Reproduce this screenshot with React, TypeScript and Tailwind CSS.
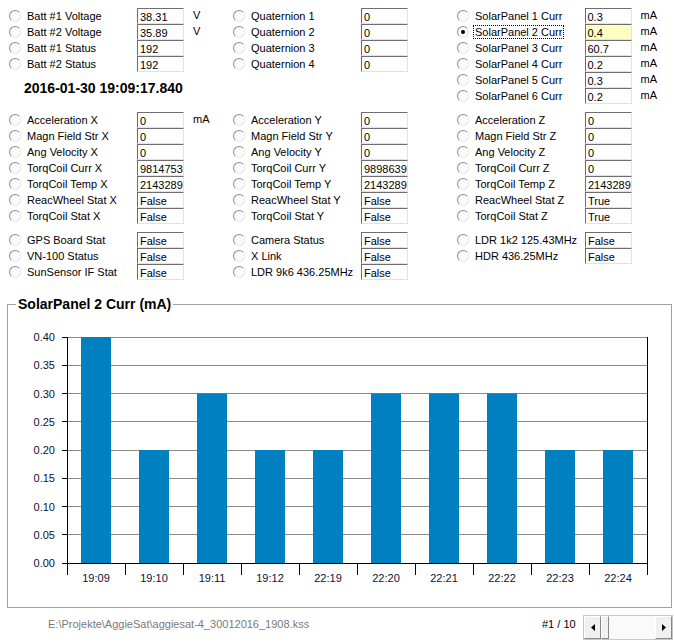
import React from "react";

type Field = { label: string; value: string; unit?: string; checked?: boolean; hilite?: boolean };

const sec1: Field[][] = [
  [
    { label: "Batt #1 Voltage", value: "38.31", unit: "V" },
    { label: "Batt #2 Voltage", value: "35.89", unit: "V" },
    { label: "Batt #1 Status", value: "192" },
    { label: "Batt #2 Status", value: "192" },
  ],
  [
    { label: "Quaternion 1", value: "0" },
    { label: "Quaternion 2", value: "0" },
    { label: "Quaternion 3", value: "0" },
    { label: "Quaternion 4", value: "0" },
  ],
  [
    { label: "SolarPanel 1 Curr", value: "0.3", unit: "mA" },
    { label: "SolarPanel 2 Curr", value: "0.4", unit: "mA", checked: true, hilite: true },
    { label: "SolarPanel 3 Curr", value: "60.7", unit: "mA" },
    { label: "SolarPanel 4 Curr", value: "0.2", unit: "mA" },
    { label: "SolarPanel 5 Curr", value: "0.3", unit: "mA" },
    { label: "SolarPanel 6 Curr", value: "0.2", unit: "mA" },
  ],
];

const axisRows = (a: string, vals: string[]): Field[] => [
  { label: "Acceleration " + a, value: vals[0], unit: a === "X" ? "mA" : undefined },
  { label: "Magn Field Str " + a, value: vals[1] },
  { label: "Ang Velocity " + a, value: vals[2] },
  { label: "TorqCoil Curr " + a, value: vals[3] },
  { label: "TorqCoil Temp " + a, value: vals[4] },
  { label: "ReacWheel Stat " + a, value: vals[5] },
  { label: "TorqCoil Stat " + a, value: vals[6] },
];

const sec2: Field[][] = [
  axisRows("X", ["0", "0", "0", "9814753", "2143289", "False", "False"]),
  axisRows("Y", ["0", "0", "0", "9898639", "2143289", "False", "False"]),
  axisRows("Z", ["0", "0", "0", "0", "2143289", "True", "True"]),
];

const sec3: Field[][] = [
  [
    { label: "GPS Board Stat", value: "False" },
    { label: "VN-100 Status", value: "False" },
    { label: "SunSensor IF Stat", value: "False" },
  ],
  [
    { label: "Camera Status", value: "False" },
    { label: "X Link", value: "False" },
    { label: "LDR 9k6 436.25MHz", value: "False" },
  ],
  [
    { label: "LDR 1k2 125.43MHz", value: "False" },
    { label: "HDR 436.25MHz", value: "False" },
  ],
];

const values = [0.4, 0.2, 0.3, 0.2, 0.2, 0.3, 0.3, 0.3, 0.2, 0.2];
const times = ["19:09", "19:10", "19:11", "19:12", "22:19", "22:20", "22:21", "22:22", "22:23", "22:24"];

function Radio({ checked }: { checked?: boolean }) {
  return (
    <span className="flex h-[12px] w-[12px] shrink-0 items-center justify-center rounded-full border border-t-[#8e8e8e] border-l-[#8e8e8e] border-b-[#e4e4e4] border-r-[#e4e4e4] bg-[#fbfbfb]">
      {checked && <span className="h-[4px] w-[4px] rounded-full bg-black" />}
    </span>
  );
}

function Row({ f }: { f: Field }) {
  return (
    <div className="flex h-[16px] items-center">
      <Radio checked={f.checked} />
      <span className="ml-[5px] w-[111px] whitespace-nowrap">
        <span className={f.checked ? "px-[1px] outline-1 outline-dotted outline-black" : "px-[1px]"}>{f.label}</span>
      </span>
      <div
        className={
          "h-[16px] w-[47px] shrink-0 border border-t-[#6e6e6e] border-l-[#6e6e6e] border-b-[#e2e2e2] border-r-[#e2e2e2] pl-[2px] pt-[2px] leading-[13px] " +
          (f.hilite ? "bg-[#ffffc4]" : "bg-white")
        }
      >
        {f.value}
      </div>
      {f.unit && <span className="ml-[9px] -mt-[3px]">{f.unit}</span>}
    </div>
  );
}

function Section({ cols, extra }: { cols: Field[][]; extra?: React.ReactNode }) {
  return (
    <div className="grid grid-cols-[224px_224px_200px]">
      {cols.map((c, i) => (
        <div key={i} className="flex flex-col">
          {c.map((f) => (
            <Row key={f.label} f={f} />
          ))}
          {i === 0 && extra}
        </div>
      ))}
    </div>
  );
}

function Chart() {
  const x0 = 59, y0 = 251, top = 25, right = 639, cw = 58;
  const step = (y0 - top) / 8;
  const scale = (y0 - top) / 0.4;
  return (
    <svg width="663" height="295" viewBox="0 0 663 295" className="block">
      {Array.from({ length: 9 }).map((_, i) => {
        const y = y0 - i * step;
        return (
          <g key={i}>
            <line x1={x0} x2={right} y1={y} y2={y} stroke={i === 0 ? "#000" : "#8a8a8a"} strokeWidth="1" shapeRendering="crispEdges" />
            <line x1={x0 - 5} x2={x0} y1={y} y2={y} stroke="#000" shapeRendering="crispEdges" />
            <text x={47} y={y + 4} textAnchor="end" fontSize="11" fontFamily="Liberation Sans, Arial, sans-serif" fill="#101030">
              {(i * 0.05).toFixed(2)}
            </text>
          </g>
        );
      })}
      {values.map((v, k) => (
        <rect key={k} x={x0 + cw * k + 14} y={y0 - v * scale} width={30} height={v * scale} fill="#0080c0" />
      ))}
      <line x1={x0} x2={x0} y1={top} y2={y0} stroke="#000" shapeRendering="crispEdges" />
      <line x1={right} x2={right} y1={top} y2={y0} stroke="#000" shapeRendering="crispEdges" />
      {Array.from({ length: 11 }).map((_, k) => (
        <line key={k} x1={x0 + cw * k} x2={x0 + cw * k} y1={y0} y2={y0 + 12} stroke="#000" shapeRendering="crispEdges" />
      ))}
      {times.map((t, k) => (
        <text key={t} x={x0 + cw * k + 29} y={270} textAnchor="middle" fontSize="11" fontFamily="Liberation Sans, Arial, sans-serif" fill="#101030">
          {t}
        </text>
      ))}
    </svg>
  );
}

function ScrollBar() {
  return (
    <div className="flex h-[25px] w-[90px] border border-[#c8c8c8] bg-[#f7f7f7]">
      <div className="flex w-[17px] items-center justify-center border border-t-white border-l-white border-b-[#888] border-r-[#888] bg-[#f0f0f0]">
        <svg width="4" height="7" viewBox="0 0 4 7"><polygon points="4,0 4,7 0,3.5" fill="#000" /></svg>
      </div>
      <div className="w-[8px] border border-t-white border-l-white border-b-[#888] border-r-[#888] bg-[#f0f0f0]" />
      <div className="flex-1 bg-[#fafafa]" />
      <div className="flex w-[17px] items-center justify-center border border-t-white border-l-white border-b-[#888] border-r-[#888] bg-[#f0f0f0]">
        <svg width="4" height="7" viewBox="0 0 4 7"><polygon points="0,0 0,7 4,3.5" fill="#000" /></svg>
      </div>
    </div>
  );
}

export default function App() {
  return (
    <div className="h-[643px] w-[674px] overflow-hidden bg-white font-['Liberation_Sans',Arial,sans-serif] text-[11px] leading-[16px] text-black">
      <div className="pl-[9px] pt-[8px]">
        <Section
          cols={sec1}
          extra={<div className="ml-[15px] mt-[8px] text-[14px] font-bold leading-[16px]">2016-01-30 19:09:17.840</div>}
        />
        <div className="mt-[8px]">
          <Section cols={sec2} />
        </div>
        <div className="mt-[8px]">
          <Section cols={sec3} />
        </div>
      </div>
      <fieldset className="ml-[7px] mt-[16px] h-[312px] w-[665px] border border-[#a0a0a0]">
        <legend className="ml-[8px] px-[2px] text-[14px] font-bold leading-[16px]">SolarPanel 2 Curr (mA)</legend>
        <Chart />
      </fieldset>
      <div className="flex h-[35px] pt-[7px]">
        <span className="mt-[1px] w-[542px] pl-[48px] text-[#7a7a7a]">E:\Projekte\AggieSat\aggiesat-4_30012016_1908.kss</span>
        <span className="mt-[1px] w-[41px]">#1 / 10</span>
        <ScrollBar />
      </div>
    </div>
  );
}
